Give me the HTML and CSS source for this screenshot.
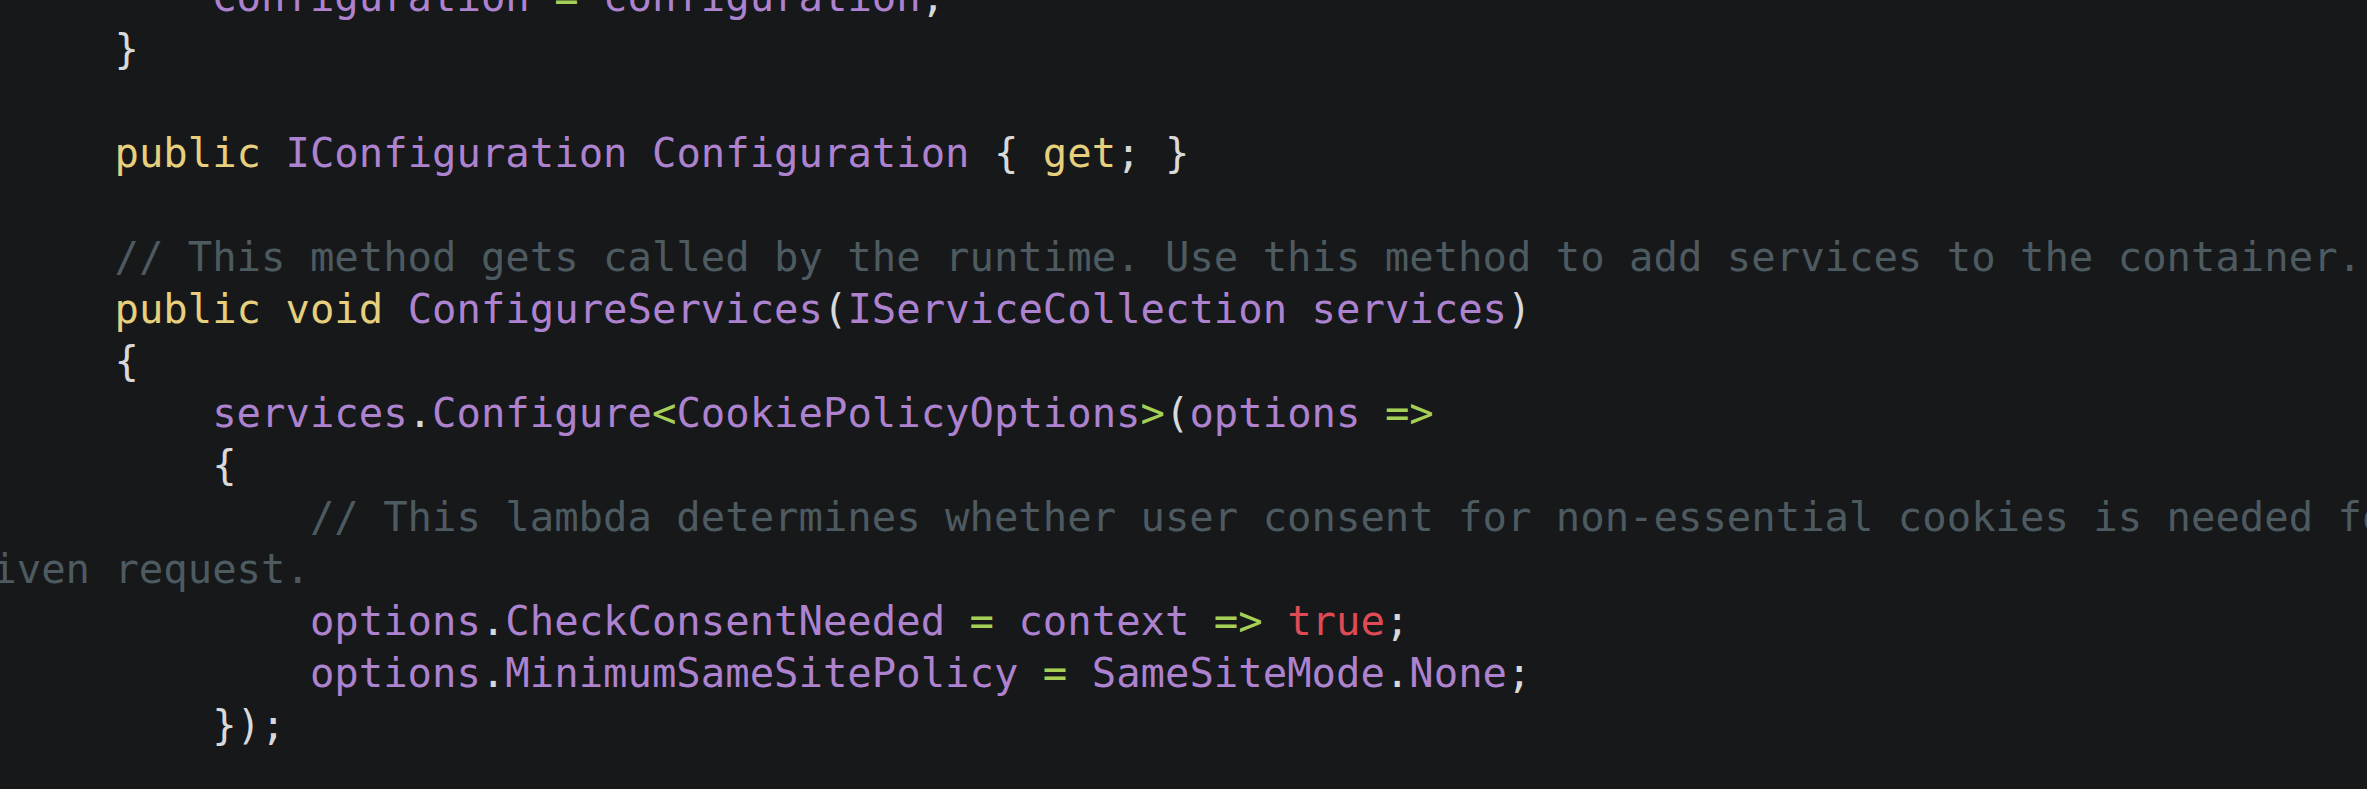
FILE: index.html
```html
<!DOCTYPE html>
<html lang="en">
<head>
<meta charset="utf-8">
<title>Startup.cs</title>
<link rel="stylesheet" href="styles.css">
</head>
<body>
<div class="editor">
  <div class="code">
<div class="line">            <span class="id">Configuration</span> <span class="op">=</span> <span class="id">configuration</span><span class="pn">;</span></div>
<div class="line"><span class="pn">        }</span></div>
<div class="line"> </div>
<div class="line">        <span class="kw">public</span> <span class="id">IConfiguration</span> <span class="id">Configuration</span> <span class="pn">{</span> <span class="kw">get</span><span class="pn">; }</span></div>
<div class="line"> </div>
<div class="line">        <span class="cm">// This method gets called by the runtime. Use this method to add services to the container.</span></div>
<div class="line">        <span class="kw">public</span> <span class="kw">void</span> <span class="id">ConfigureServices</span><span class="pn">(</span><span class="id">IServiceCollection</span> <span class="id">services</span><span class="pn">)</span></div>
<div class="line"><span class="pn">        {</span></div>
<div class="line">            <span class="id">services</span><span class="pn">.</span><span class="id">Configure</span><span class="op">&lt;</span><span class="id">CookiePolicyOptions</span><span class="op">&gt;</span><span class="pn">(</span><span class="id">options</span> <span class="op">=&gt;</span></div>
<div class="line"><span class="pn">            {</span></div>
<div class="line">                <span class="cm">// This lambda determines whether user consent for non-essential cookies is needed for</span></div>
<div class="line"><span class="cm">a given request.</span></div>
<div class="line">                <span class="id">options</span><span class="pn">.</span><span class="id">CheckConsentNeeded</span> <span class="op">=</span> <span class="id">context</span> <span class="op">=&gt;</span> <span class="lit">true</span><span class="pn">;</span></div>
<div class="line">                <span class="id">options</span><span class="pn">.</span><span class="id">MinimumSameSitePolicy</span> <span class="op">=</span> <span class="id">SameSiteMode</span><span class="pn">.</span><span class="id">None</span><span class="pn">;</span></div>
<div class="line"><span class="pn">            });</span></div>
<div class="line"> </div>
  </div>
</div>
</body>
</html>
```

FILE: styles.css
```css
html, body {
  margin: 0;
  padding: 0;
  background: #17181a;
  overflow: hidden;
}

.editor {
  width: 2367px;
  height: 789px;
  overflow: hidden;
  background: #17181a;
}

.code {
  margin-top: -29px;
  margin-left: -81px;
  font-family: "DejaVu Sans Mono", monospace;
  font-size: 40.6px;
  line-height: 52px;
  color: #d9d9d9;
}

.line {
  height: 52px;
  white-space: pre;
}

.kw { color: #e6cf7d; }
.id { color: #ad82cf; }
.cm { color: #4d5b61; }
.pn { color: #d9d9d9; }
.op { color: #a5cf55; }
.lit { color: #de4b55; }
```
